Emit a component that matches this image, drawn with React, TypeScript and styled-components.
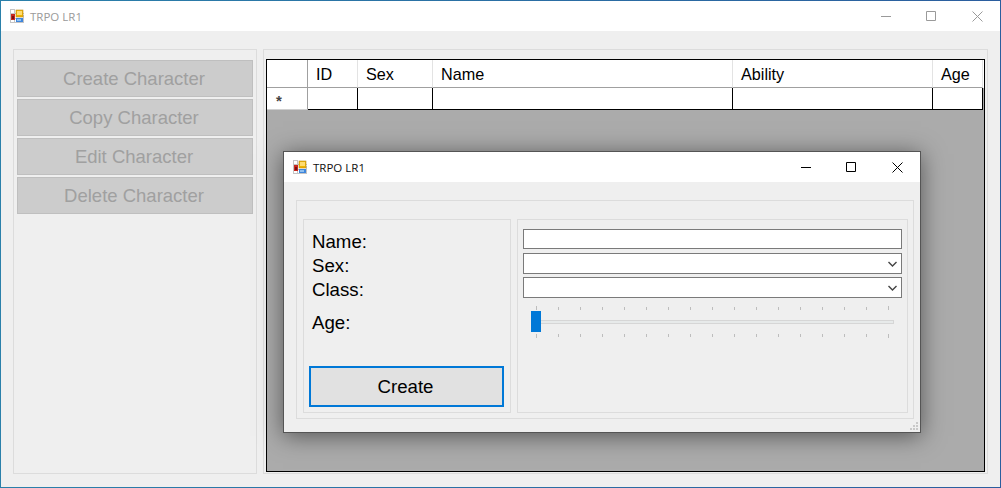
import React from "react";
import styled, { createGlobalStyle } from "styled-components";

const Global = createGlobalStyle`
  html, body { margin: 0; padding: 0; background: #fff; }
  * { box-sizing: border-box; }
`;

const Window = styled.div`
  position: relative;
  width: 1001px;
  height: 488px;
  display: flex;
  flex-direction: column;
  background: #efefef;
  border: 1px solid;
  border-image: linear-gradient(90deg, #2a80aa, #2b5e9e) 1;
  overflow: hidden;
  font-family: "Liberation Sans", Arial, sans-serif;
`;

const TitleBar = styled.div<{ $height: number }>`
  height: ${(p) => p.$height}px;
  flex: none;
  display: flex;
  align-items: center;
  background: #fff;
`;

const TitleIcon = styled.svg<{ $left: number }>`
  margin-left: ${(p) => p.$left}px;
  flex: none;
`;

const TitleText = styled.span<{ $active?: boolean }>`
  margin-left: 6px;
  font-family: "Open Sans", "Noto Sans", sans-serif;
  font-size: 11.5px;
  color: ${(p) => (p.$active ? "#111" : "#9a9a9a")};
`;

const Controls = styled.div`
  margin-left: auto;
  display: flex;
  height: 100%;
  align-items: center;
`;

const ControlIcon = styled.svg<{ $gap: number }>`
  display: block;
  margin-right: ${(p) => p.$gap}px;
`;

const Content = styled.div`
  flex: 1;
  display: flex;
  gap: 6px;
  padding: 18px 12px 13px;
  min-height: 0;
`;

const SidePanel = styled.div`
  width: 244px;
  border: 1px solid #dcdcdc;
  padding: 10px 3px;
  display: flex;
  flex-direction: column;
  gap: 2px;
`;

const SideButton = styled.button`
  width: 236px;
  height: 37px;
  padding: 0 2px 0 0;
  background: #cccccc;
  border: 1px solid #bfbfbf;
  color: #a0a0a0;
  font-family: inherit;
  font-size: 18.5px;
`;

const GridPanel = styled.div`
  width: 725px;
  border: 1px solid #dcdcdc;
  padding: 9px 2px 1px;
`;

const DataGrid = styled.div`
  width: 719px;
  height: 413px;
  border: 1px solid #000;
  background: #ababab;
`;

const columns = "41px 50px 75px 300px 200px 50px";

const HeaderRow = styled.div`
  display: grid;
  grid-template-columns: ${columns} 1px;
  height: 28px;
  background: #fff;
`;

const HeaderCell = styled.div<{ $corner?: boolean }>`
  display: flex;
  align-items: center;
  padding: 2px 0 0 8px;
  font-size: 16.2px;
  color: #000;
  border-bottom: 1px solid #a0a0a0;
  border-right: 1px solid ${(p) => (p.$corner ? "#a0a0a0" : "#e3e3e3")};
`;

const DataRow = styled.div`
  display: grid;
  grid-template-columns: ${columns};
  grid-template-rows: 22px;
  height: 22px;
  background: #fff;
  width: 716px;
`;

const RowHeader = styled.div`
  padding: 5px 0 0 9px;
  border-right: 1px solid #a0a0a0;
  border-bottom: 1px solid #d0d0d0;
  font-size: 15px;
  line-height: 15px;
  font-weight: 700;
  color: #444;
  overflow: hidden;
`;

const DataCell = styled.div`
  border-right: 1px solid #000;
  border-bottom: 1px solid #000;
`;

const Dialog = styled.div`
  position: absolute;
  left: 282px;
  top: 150px;
  width: 638px;
  height: 282px;
  display: flex;
  flex-direction: column;
  background: #efefef;
  border: 1px solid #555;
  box-shadow: 0 3px 22px rgba(0, 0, 0, 0.5);
`;

const DialogBody = styled.div`
  position: relative;
  flex: 1;
  padding: 18px 6px 13px 12px;
`;

const FormPanel = styled.div`
  width: 618px;
  height: 219px;
  border: 1px solid #dcdcdc;
  padding: 18px 5px 5px 6px;
  display: flex;
  gap: 6px;
`;

const LabelColumn = styled.div`
  width: 208px;
  border: 1px solid #dcdcdc;
  padding: 10px 6px 5px 5px;
  display: flex;
  flex-direction: column;
`;

const FieldLabel = styled.div<{ $offset?: number }>`
  height: 24px;
  line-height: 24px;
  margin-left: 3px;
  margin-top: ${(p) => p.$offset ?? 0}px;
  font-size: 18.67px;
  color: #000;
`;

const CreateButton = styled.button`
  margin-top: auto;
  width: 195px;
  height: 41px;
  padding: 0 2px 0 0;
  background: #e1e1e1;
  border: 2px solid #0078d7;
  color: #000;
  font-family: inherit;
  font-size: 18.67px;
`;

const FieldColumn = styled.div`
  width: 391px;
  border: 1px solid #dcdcdc;
  padding: 9px 5px;
  display: flex;
  flex-direction: column;
`;

const TextBox = styled.div`
  width: 379px;
  height: 20px;
  background: #fff;
  border: 1px solid #7a7a7a;
`;

const Combo = styled.div<{ $top: number }>`
  width: 379px;
  height: 21px;
  margin-top: ${(p) => p.$top}px;
  padding-right: 4px;
  display: flex;
  align-items: center;
  justify-content: flex-end;
  background: #fff;
  border: 1px solid #7a7a7a;
`;

const Slider = styled.div`
  margin-top: 8px;
  width: 363px;
  margin-left: 8px;
`;

const TickRow = styled.div<{ $bottom?: boolean }>`
  display: flex;
  justify-content: space-between;
  align-items: ${(p) => (p.$bottom ? "flex-start" : "flex-end")};
  width: 353px;
  height: 4px;
  margin: ${(p) => (p.$bottom ? "1px 0 0 5px" : "0 0 1px 5px")};
`;

const Tick = styled.i<{ $long?: boolean }>`
  display: block;
  width: 1px;
  height: ${(p) => (p.$long ? 4 : 3)}px;
  background: #bdbdbd;
`;

const TrackArea = styled.div`
  position: relative;
  height: 22px;
  display: flex;
  align-items: center;
`;

const Track = styled.div`
  width: 100%;
  height: 4px;
  background: #e7eaea;
  border: 1px solid #d6d6d6;
`;

const Thumb = styled.div`
  position: absolute;
  left: 0;
  top: 0;
  width: 10px;
  height: 21px;
  background: #0078d7;
`;

const Grip = styled.svg`
  position: absolute;
  right: 1px;
  bottom: 1px;
`;

const AppIcon: React.FC<{ left: number }> = ({ left }) => (
  <TitleIcon $left={left} width="14" height="14" viewBox="0 0 14 14">
    <rect x="0" y="0" width="14" height="14" fill="#fff" />
    <path d="M0 4.5h14M0 9.5h14M4.5 0v14M0 .5h5M.5 0v14M0 13.5h14M13.5 6v8" stroke="#c4c4c4" fill="none" />
    <rect x="1" y="5" width="4" height="6" fill="#c8281e" />
    <rect x="2" y="7" width="2" height="3" fill="#7a1010" />
    <rect x="6" y="1" width="7" height="7" fill="#f0b400" stroke="#b88a20" strokeWidth="0.6" />
    <rect x="7" y="2" width="5" height="4" fill="#ffdc70" />
    <rect x="6" y="9" width="7" height="4" fill="#3f86dc" />
    <rect x="7" y="10" width="4" height="2" fill="#8fc0f0" />
  </TitleIcon>
);

const WindowControls: React.FC<{ color: string; gaps: [number, number, number] }> = ({ color, gaps }) => (
  <Controls>
    <ControlIcon $gap={gaps[0]} width="10" height="10" viewBox="0 0 10 10">
      <path d="M0 5.5h10" stroke={color} />
    </ControlIcon>
    <ControlIcon $gap={gaps[1]} width="10" height="10" viewBox="0 0 10 10">
      <path d="M.5.5h9v9h-9z" stroke={color} fill="none" />
    </ControlIcon>
    <ControlIcon $gap={gaps[2]} width="11" height="11" viewBox="0 0 11 11">
      <path d="M.5.5l10 10M10.5.5l-10 10" stroke={color} fill="none" />
    </ControlIcon>
  </Controls>
);

const Chevron = () => (
  <svg width="9" height="6" viewBox="0 0 9 6">
    <path d="M.5 1l4 4 4-4" stroke="#444" strokeWidth="1.4" fill="none" />
  </svg>
);

const Ticks: React.FC<{ bottom?: boolean }> = ({ bottom }) => (
  <TickRow $bottom={bottom}>
    {Array.from({ length: 17 }, (_, i) => (
      <Tick key={i} $long={i === 0 || i === 16} />
    ))}
  </TickRow>
);

const headers = ["ID", "Sex", "Name", "Ability", "Age"];
const sideActions = ["Create Character", "Copy Character", "Edit Character", "Delete Character"];

export default function App() {
  return (
    <>
      <Global />
      <Window>
        <TitleBar $height={30}>
          <AppIcon left={9} />
          <TitleText>TRPO LR1</TitleText>
          <WindowControls color="#9a9a9a" gaps={[35, 36, 17]} />
        </TitleBar>
        <Content>
          <SidePanel>
            {sideActions.map((a) => (
              <SideButton key={a} disabled>
                {a}
              </SideButton>
            ))}
          </SidePanel>
          <GridPanel>
            <DataGrid>
              <HeaderRow>
                <HeaderCell $corner />
                {headers.map((h) => (
                  <HeaderCell key={h}>{h}</HeaderCell>
                ))}
              </HeaderRow>
              <DataRow>
                <RowHeader>*</RowHeader>
                {headers.map((h) => (
                  <DataCell key={h} />
                ))}
              </DataRow>
            </DataGrid>
          </GridPanel>
        </Content>
        <Dialog>
          <TitleBar $height={30}>
            <AppIcon left={9} />
            <TitleText $active>TRPO LR1</TitleText>
            <WindowControls color="#000" gaps={[35, 36, 17]} />
          </TitleBar>
          <DialogBody>
            <FormPanel>
              <LabelColumn>
                <FieldLabel>Name:</FieldLabel>
                <FieldLabel>Sex:</FieldLabel>
                <FieldLabel>Class:</FieldLabel>
                <FieldLabel $offset={9}>Age:</FieldLabel>
                <CreateButton>Create</CreateButton>
              </LabelColumn>
              <FieldColumn>
                <TextBox />
                <Combo $top={4}>
                  <Chevron />
                </Combo>
                <Combo $top={3}>
                  <Chevron />
                </Combo>
                <Slider>
                  <Ticks />
                  <TrackArea>
                    <Track />
                    <Thumb />
                  </TrackArea>
                  <Ticks bottom />
                </Slider>
              </FieldColumn>
            </FormPanel>
            <Grip width="9" height="9" viewBox="0 0 9 9" fill="#c8c8c8">
              <rect x="6" y="0" width="2" height="2" />
              <rect x="3" y="3" width="2" height="2" />
              <rect x="6" y="3" width="2" height="2" />
              <rect x="0" y="6" width="2" height="2" />
              <rect x="3" y="6" width="2" height="2" />
              <rect x="6" y="6" width="2" height="2" />
            </Grip>
          </DialogBody>
        </Dialog>
      </Window>
    </>
  );
}
